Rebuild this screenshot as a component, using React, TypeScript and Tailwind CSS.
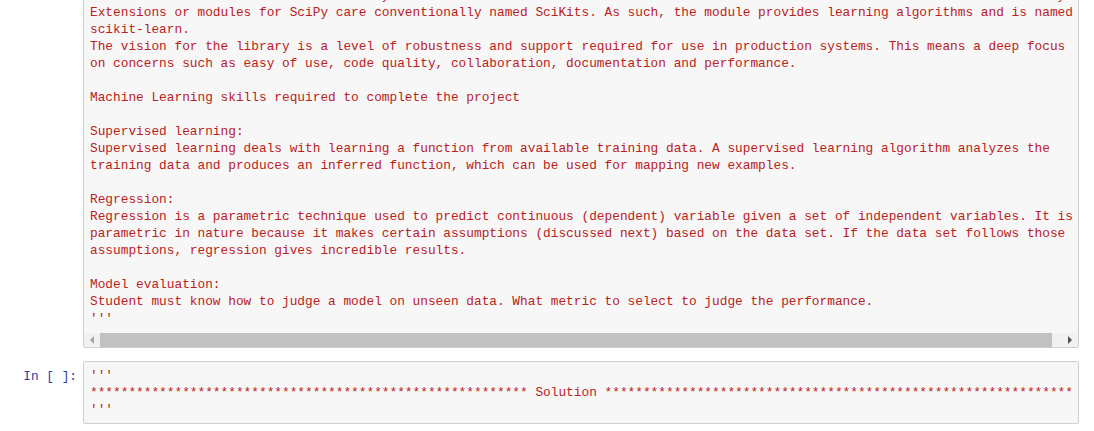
const lines = [
  "Scikit-learn is a free module for SciPy which is licensed under the BSD licence and is now used within the scientific community.",
  "Extensions or modules for SciPy care conventionally named SciKits. As such, the module provides learning algorithms and is named",
  "scikit-learn.",
  "The vision for the library is a level of robustness and support required for use in production systems. This means a deep focus",
  "on concerns such as easy of use, code quality, collaboration, documentation and performance.",
  "",
  "Machine Learning skills required to complete the project",
  "",
  "Supervised learning:",
  "Supervised learning deals with learning a function from available training data. A supervised learning algorithm analyzes the",
  "training data and produces an inferred function, which can be used for mapping new examples.",
  "",
  "Regression:",
  "Regression is a parametric technique used to predict continuous (dependent) variable given a set of independent variables. It is",
  "parametric in nature because it makes certain assumptions (discussed next) based on the data set. If the data set follows those",
  "assumptions, regression gives incredible results.",
  "",
  "Model evaluation:",
  "Student must know how to judge a model on unseen data. What metric to select to judge the performance.",
  "'''",
];

const solution = [
  "'''",
  "*".repeat(57) + " Solution " + "*".repeat(61),
  "'''",
];

const mono = "font-['Liberation_Mono',monospace] text-[12.8px] leading-[17px]";

function Prompt({ label }: { label?: string }) {
  return (
    <div className={`w-[83px] shrink-0 pr-[6px] pt-[7px] text-right text-[#303F9F] ${mono}`}>
      {label}
    </div>
  );
}

function HScrollbar() {
  return (
    <div className="flex h-[14px] mt-[6px] bg-[#f1f1f1]">
      <div className="w-[16px] flex items-center justify-center">
        <div className="w-0 h-0 border-y-[4px] border-y-transparent border-r-[4px] border-r-[#a3a3a3]" />
      </div>
      <div className="flex-1 flex pr-[10px]">
        <div className="flex-1 bg-[#c1c1c1]" />
      </div>
      <div className="w-[16px] flex items-center justify-center">
        <div className="w-0 h-0 border-y-[4px] border-y-transparent border-l-[4px] border-l-[#505050]" />
      </div>
    </div>
  );
}

export default function App() {
  return (
    <div className="w-[1094px] h-[431px] overflow-hidden bg-white">
      <div className="flex -mt-[18px] pr-[15px]">
        <Prompt />
        <div className="flex-1 min-w-0 border border-[#cfcfcf] rounded-[2px] bg-[#f7f7f7]">
          <pre className={`pt-[4px] px-[6px] overflow-hidden text-[#BA2121] ${mono}`}>
            {lines.join("\n")}
          </pre>
          <HScrollbar />
        </div>
      </div>

      <div className="flex mt-[13px] pr-[15px]">
        <Prompt label="In [ ]:" />
        <div className="flex-1 min-w-0 border border-[#cfcfcf] rounded-[2px] bg-[#f7f7f7]">
          <pre className={`py-[5px] px-[6px] overflow-hidden text-[#BA2121] ${mono}`}>
            {solution.join("\n")}
          </pre>
        </div>
      </div>
    </div>
  );
}
